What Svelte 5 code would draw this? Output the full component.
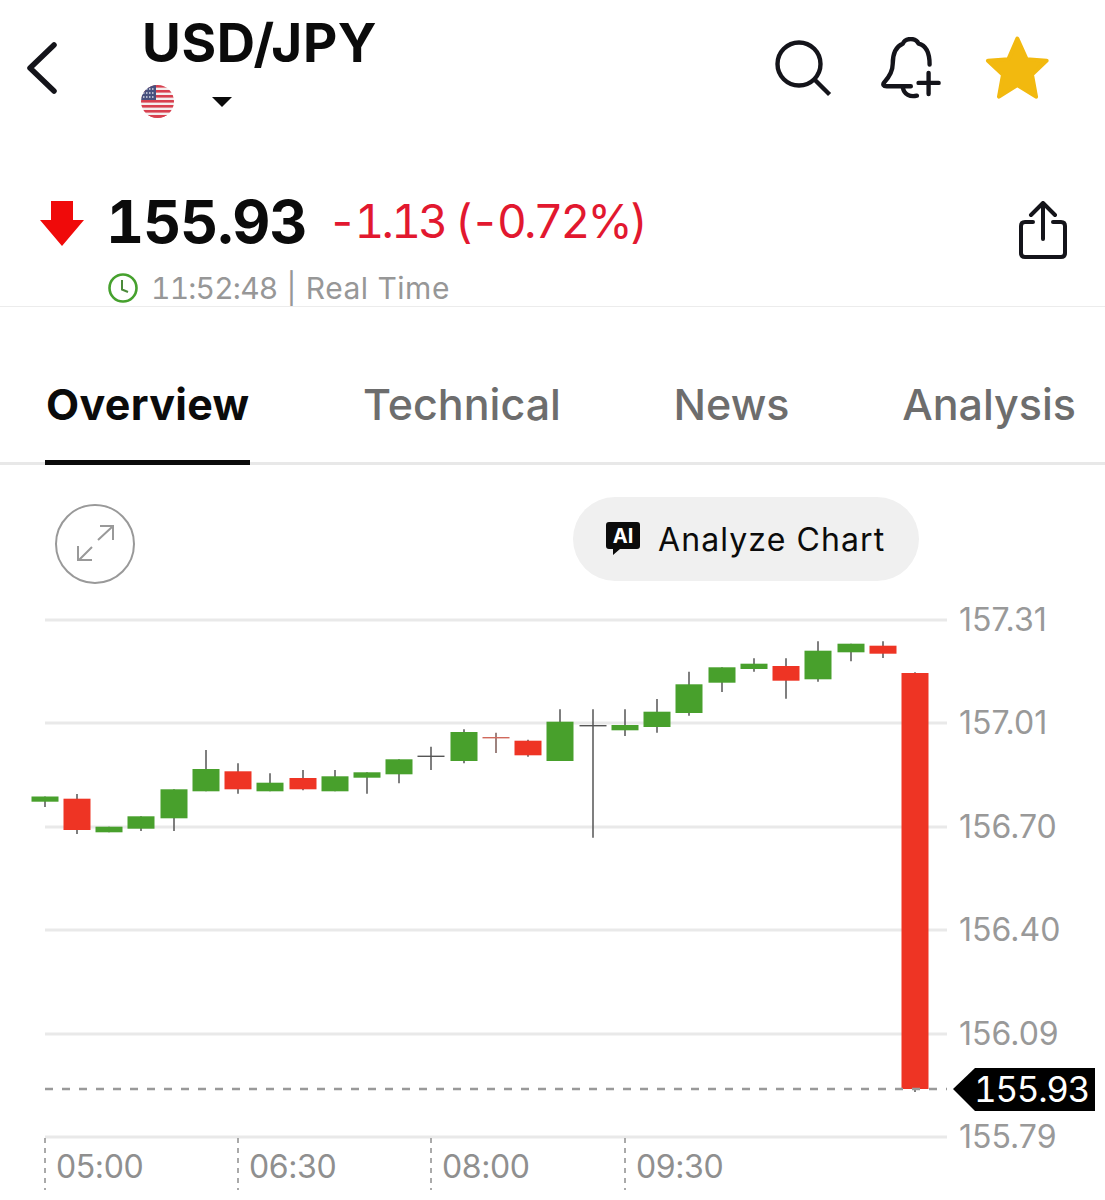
<script lang="ts">
	const GREEN = '#48a02c';
	const RED = '#ee3424';
	const DARK = '#555';

	// x, top, bottom, high, low, kind
	const candles = [
		[45, 796.5, 801.7, 796.5, 807, 'g'],
		[77, 798.7, 830, 794, 834, 'r'],
		[109, 826.7, 832.3, 826.7, 832.3, 'g'],
		[141, 816.3, 828.7, 816.3, 831, 'g'],
		[174, 789.3, 818.3, 789.3, 831, 'g'],
		[206, 769, 791.3, 750, 791.3, 'g'],
		[238, 771.3, 789.3, 763.3, 793.7, 'r'],
		[270, 782.7, 791.3, 773.3, 791.3, 'g'],
		[303, 778, 789.3, 770, 790.3, 'r'],
		[335, 776.3, 791.3, 770, 791.3, 'g'],
		[367, 772.3, 777.7, 772.3, 793.7, 'g'],
		[399, 759.3, 774.3, 759.3, 783.3, 'g'],
		[431, 755.6, 757, 746.7, 770, 'd'],
		[464, 732, 761, 729.3, 763.3, 'g'],
		[496, 737, 738.4, 732.7, 753, 'e'],
		[528, 740.7, 755.3, 739.7, 756.7, 'r'],
		[560, 721.7, 761, 709.3, 761, 'g'],
		[593, 725, 726.4, 709.3, 837.7, 'd'],
		[625, 725, 730.3, 709.3, 736, 'g'],
		[657, 711.7, 727, 699, 732.7, 'g'],
		[689, 684.3, 713, 671.7, 715.7, 'g'],
		[722, 667.3, 682.7, 667.3, 692, 'g'],
		[754, 663.7, 669, 658.3, 671.7, 'g'],
		[786, 666, 680.7, 658.3, 698.7, 'r'],
		[818, 650.7, 679.3, 641.3, 681.7, 'g'],
		[851, 643.7, 652.3, 643.7, 661.3, 'g'],
		[883, 645.7, 653.7, 641.3, 658, 'r'],
		[915, 673, 1089, 672.3, 1092, 'r']
	] as const;

	const fills = { g: GREEN, r: RED, d: DARK, e: '#d0695c' };

	const prices = [
		['157.31', 620],
		['157.01', 723],
		['156.70', 827],
		['156.40', 930],
		['156.09', 1034],
		['155.79', 1137]
	] as const;

	const times = [
		['05:00', 45],
		['06:30', 238],
		['08:00', 431],
		['09:30', 625]
	] as const;

	const tabs = ['Overview', 'Technical', 'News', 'Analysis'];
	const stripes = [0, 1, 2, 3, 4, 5, 6];
</script>

<div class="page">
	<header class="top">
		<svg class="back" viewBox="0 0 32 52" fill="none" stroke="#14141a" stroke-width="5.5" stroke-linecap="round" stroke-linejoin="round">
			<path d="M29 3 L5 26 L29 49" />
		</svg>
		<div class="pair">
			<h1>USD/JPY</h1>
			<div class="pair-sub">
				<svg class="flag" viewBox="0 0 33 33">
					<defs>
						<clipPath id="flag-clip"><circle cx="16.5" cy="16.5" r="16.5" /></clipPath>
					</defs>
					<g clip-path="url(#flag-clip)">
						<rect width="33" height="33" fill="#f4eeee" />
						{#each stripes as i}
							<rect y={i * 5} width="33" height="2.6" fill="#d8404f" />
						{/each}
						<rect y="30" width="33" height="3" fill="#d8404f" />
						<rect width="15" height="15" fill="#48507e" />
						<path d="M2 4h11M2 8h11M2 12h11" stroke="#d9dbe8" stroke-width="1.4" stroke-dasharray="1.5 1.5" />
					</g>
				</svg>
				<span class="caret"></span>
			</div>
		</div>
		<div class="actions">
			<svg class="search" viewBox="0 0 60 60" fill="none" stroke="#14141a" stroke-width="4.4">
				<circle cx="26" cy="25" r="21.5" />
				<path d="M42 41 L55 54" stroke-linecap="square" />
			</svg>
			<svg class="bell" viewBox="390 50 185 185" fill="none" stroke="#14141a" stroke-width="13" stroke-linecap="round" stroke-linejoin="round">
				<path d="M538 132 C538 95 525 75 505 70 C500 58 490 56 482 56 C472 56 462 60 458 70 C438 78 428 100 428 130 C428 155 415 172 403 185 C397 192 400 197 410 197 L482 197" />
				<path d="M458 200 C462 222 480 230 500 225" />
				<path d="M505 187 H565 M535 157 V220" />
			</svg>
			<svg class="star" viewBox="705 50 195 195">
				<path d="M802 58 L830 120 L890 124 L846 166 L858 232 L802 197 L747 232 L759 166 L714 124 L775 120 Z" fill="#f2b90f" stroke="#f2b90f" stroke-width="12" stroke-linejoin="round" />
			</svg>
		</div>
	</header>

	<section class="quote">
		<div class="price-row">
			<svg class="arrow" viewBox="0 0 44 45"><path d="M11 0 H33 V19 H44 L22 45 L0 19 H11 Z" fill="#f00a0a" /></svg>
			<span class="price">155.93</span>
			<span class="delta">-1.13 (-0.72%)</span>
			<svg class="share" viewBox="0 0 48 58" fill="none" stroke="#14141a" stroke-width="4" stroke-linecap="round" stroke-linejoin="round">
				<path d="M14 21 H6 Q2 21 2 25 V52 Q2 56 6 56 H42 Q46 56 46 52 V25 Q46 21 42 21 H34" />
				<path d="M24 38 V3 M12 14 L24 2 L36 14" />
			</svg>
		</div>
		<div class="time-row">
			<svg class="clock" viewBox="0 0 30 30" fill="none" stroke="#46a12e" stroke-width="2.6">
				<circle cx="15" cy="15" r="13.5" />
				<path d="M14 7 V16.5 L20 19" stroke="#4b8a3a" stroke-width="2" />
			</svg>
			<span><span class="stamp">11:52:48</span> | Real Time</span>
		</div>
	</section>

	<nav class="tabs">
		{#each tabs as tab, i}
			<span class="tab" class:active={i === 0}>{tab}</span>
		{/each}
	</nav>

	<div class="tools">
		<button class="expand" type="button" aria-label="Expand chart">
			<svg viewBox="0 0 40 40" fill="none" stroke="#999" stroke-width="2">
				<path d="M23 16 L37 3 M25 2 H38 V16" />
				<path d="M17 23 L4 36 M3 22 V36 H17" />
			</svg>
		</button>
		<button class="analyze" type="button">
			<svg viewBox="0 0 34 34">
				<path d="M3 0 H31 Q34 0 34 3 V24 Q34 27 31 27 H14 L7 33 V27 H3 Q0 27 0 24 V3 Q0 0 3 0 Z" fill="#0b0b0b" />
				<text x="17" y="21" text-anchor="middle" class="ai">AI</text>
			</svg>
			<span>Analyze Chart</span>
		</button>
	</div>

	<svg class="chart" viewBox="0 590 1105 610">
		{#each prices as [label, y]}
			<line x1="45" x2="947" y1={y} y2={y} stroke="#e9e9e9" stroke-width="3" />
			<text x="959" y={y + 11} class="axis">{label}</text>
		{/each}

		{#each times as [label, x]}
			<line x1={x} x2={x} y1="1138" y2="1190" stroke="#8f8f8f" stroke-width="1.5" stroke-dasharray="5 5" />
			<text x={x + 11} y="1178" class="axis time">{label}</text>
		{/each}

		{#each candles as [x, top, bottom, high, low, kind]}
			<line x1={x} x2={x} y1={high} y2={low} stroke={kind === 'e' ? '#7d5a55' : DARK} stroke-width="1.5" />
			<rect x={x - 13.5} y={top} width="27" height={bottom - top} fill={fills[kind]} />
		{/each}

		<line x1="45" x2="947" y1="1089" y2="1089" stroke="#999" stroke-width="2.4" stroke-dasharray="8 9" />
		<path d="M953 1089 L975 1068 H1095 V1111 H975 Z" fill="#000" />
		<text x="974" y="1102" class="last">155.93</text>
	</svg>
</div>

<style>
	:global(body) {
		margin: 0;
		background: #fff;
	}

	.page {
		width: 1105px;
		height: 1200px;
		overflow: hidden;
		font-family: Inter, 'Liberation Sans', sans-serif;
		color: #0b0b0b;
	}

	.top {
		display: flex;
		align-items: flex-start;
		height: 176px;
		box-sizing: border-box;
		padding: 14px 55px 0 25px;
	}

	.back {
		width: 32px;
		height: 52px;
		margin-top: 28px;
	}

	.pair {
		margin-left: 85px;
	}

	h1 {
		margin: 0;
		font-size: 53px;
		line-height: 58px;
		font-weight: 700;
		letter-spacing: 0.6px;
	}

	.pair-sub {
		display: flex;
		align-items: center;
		margin-top: 13px;
		margin-left: -1px;
	}

	.flag {
		width: 33px;
		height: 33px;
	}

	.caret {
		width: 0;
		height: 0;
		margin-left: 38px;
		border-left: 10px solid transparent;
		border-right: 10px solid transparent;
		border-top: 10px solid #0b0b0b;
	}

	.actions {
		display: flex;
		align-items: flex-start;
		margin-left: auto;
	}

	.search {
		width: 60px;
		height: 60px;
		margin-top: 25px;
	}

	.bell {
		width: 62px;
		height: 62px;
		margin-top: 23px;
		margin-left: 47px;
	}

	.star {
		width: 65px;
		height: 65px;
		margin-top: 22px;
		margin-left: 43px;
	}

	.quote {
		height: 131px;
		box-sizing: border-box;
		border-bottom: 1px solid #ececec;
	}

	.price-row {
		display: flex;
		align-items: center;
		height: 90px;
		padding: 0 38px 0 40px;
	}

	.arrow {
		width: 44px;
		height: 45px;
		margin-top: 4px;
	}

	.price {
		margin-left: 22px;
		font-size: 59px;
		font-weight: 700;
		font-variant-numeric: tabular-nums;
		letter-spacing: -1px;
	}

	.delta {
		margin-left: 21px;
		font-size: 46px;
		font-weight: 400;
		font-variant-numeric: tabular-nums;
		color: #e2182f;
		letter-spacing: -2.8px;
	}

	.share {
		width: 48px;
		height: 58px;
		margin-top: 18px;
		margin-left: auto;
	}

	.time-row {
		display: flex;
		align-items: center;
		gap: 13px;
		margin-top: 4px;
		padding-left: 108px;
		font-size: 30px;
		color: #979797;
		letter-spacing: 0.5px;
	}

	.stamp {
		font-variant-numeric: tabular-nums;
		letter-spacing: -0.8px;
	}

	.clock {
		width: 30px;
		height: 30px;
	}

	.tabs {
		display: flex;
		gap: 112.7px;
		height: 158px;
		box-sizing: border-box;
		padding: 68px 0 0 46px;
		border-bottom: 3px solid #e8e8e8;
		white-space: nowrap;
	}

	.tab {
		height: 90px;
		box-sizing: border-box;
		font-size: 43px;
		line-height: 58px;
		font-weight: 500;
		color: #6d6d6d;
	}

	.tab.active {
		font-weight: 700;
		color: #0b0b0b;
		border-bottom: 5px solid #0b0b0b;
		margin-left: -1px;
		padding: 0 1px;
		letter-spacing: 0.3px;
	}

	.tools {
		display: flex;
		align-items: flex-start;
		height: 125px;
		box-sizing: border-box;
		padding: 32px 0 0 55px;
	}

	.expand {
		display: flex;
		align-items: center;
		justify-content: center;
		width: 80px;
		height: 80px;
		margin-top: 7px;
		padding: 0;
		background: none;
		border: 2px solid #999;
		border-radius: 50%;
	}

	.expand svg {
		width: 40px;
		height: 40px;
		overflow: visible;
	}

	.analyze {
		display: flex;
		align-items: center;
		gap: 18px;
		width: 346px;
		height: 84px;
		box-sizing: border-box;
		margin-left: 438px;
		padding: 0 0 0 33px;
		background: #f0f0f0;
		border: none;
		border-radius: 42px;
		font-family: inherit;
		font-size: 32px;
		letter-spacing: 1.1px;
		color: #0b0b0b;
	}

	.analyze svg {
		width: 34px;
		height: 34px;
	}

	.ai {
		font-size: 20px;
		font-weight: 700;
		fill: #fff;
		letter-spacing: 0;
	}

	.chart {
		display: block;
		width: 1105px;
		height: 610px;
	}

	.axis {
		font-size: 32px;
		fill: #999;
	}

	.axis.time {
		fill: #8f8f8f;
		letter-spacing: -0.4px;
	}

	.last {
		font-size: 35px;
		font-variant-numeric: tabular-nums;
		letter-spacing: -1.3px;
		fill: #fff;
	}
</style>
